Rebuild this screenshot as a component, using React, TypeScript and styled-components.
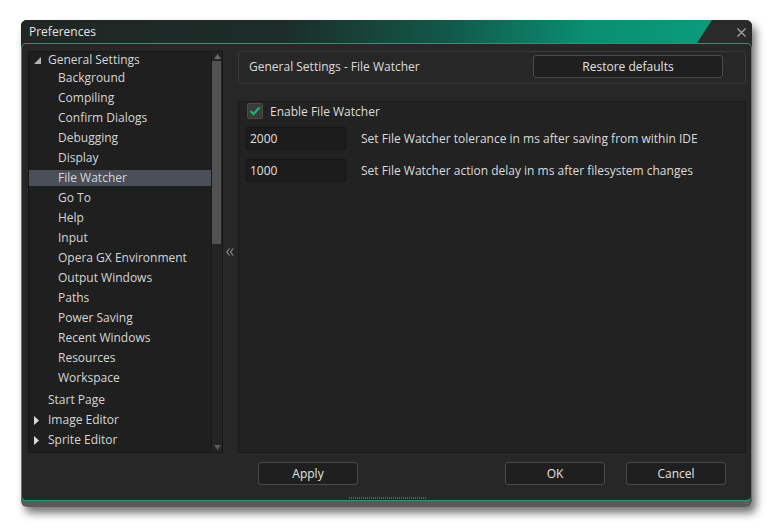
import React from 'react';
import styled, { createGlobalStyle } from 'styled-components';

const Global = createGlobalStyle`
  html, body { margin: 0; padding: 0; background: #ffffff; }
  body { font-family: 'Open Sans', 'Noto Sans', sans-serif; font-size: 12px; }
  * { box-sizing: border-box; }
`;

const Page = styled.div`
  width: 774px;
  height: 528px;
  padding: 20px 0 0 21px;
`;

const Window = styled.div`
  width: 731px;
  display: flex;
  flex-direction: column;
  border-radius: 6px;
  background: linear-gradient(to bottom, #262a29 0, #262a29 50%, #5a5a5a 50%, #5a5a5a 100%);
  padding-bottom: 6px;
  box-shadow: 4px 6px 9px rgba(0, 0, 0, 0.55);
  overflow: hidden;
`;

const TitleBar = styled.div`
  height: 23px;
  display: flex;
  background: #2a2a2a;
`;

const TitleFill = styled.div`
  flex: 1;
  padding-left: 8px;
  line-height: 23px;
  color: #e4e4e4;
  font-size: 12px;
  background: linear-gradient(to right, #202624 0%, #1c2d29 38%, #12594a 62%, #0a8f72 82%, #0a9c7c 100%);
  clip-path: polygon(0 0, 100% 0, calc(100% - 15px) 100%, 0 100%);
`;

const CloseArea = styled.div`
  width: 40px;
  display: flex;
  align-items: center;
  justify-content: flex-end;
  padding: 2px 6px 0 0;
`;

const Body = styled.div`
  position: relative;
  display: flex;
  flex-direction: column;
  border: 1px solid #17a06e;
  border-radius: 5px;
  background: #272727;
  padding: 7px 5px 0 6px;
`;

const MainRow = styled.div`
  display: flex;
  height: 402px;
`;

const TreePanel = styled.div`
  width: 195px;
  border: 1px solid #171717;
  background: #1f1f1f;
  display: grid;
  grid-template-columns: 182px 11px;
  overflow: hidden;
`;

const TreeList = styled.div`
  display: flex;
  flex-direction: column;
`;

const ChildGroup = styled.div`
  display: flex;
  flex-direction: column;
  margin-top: -2px;
  padding-bottom: 2px;
`;

const Row = styled.div`
  height: 20px;
  flex: none;
`;

const RowLabel = styled.div<{ $indent: number; $selected?: boolean }>`
  position: relative;
  height: 16px;
  line-height: 16px;
  padding-left: ${(p) => p.$indent}px;
  color: #d6d6d6;
  white-space: nowrap;
  background: ${(p) => (p.$selected ? '#4b4f57' : 'transparent')};
`;

const Toggle = styled.span`
  position: absolute;
  left: 5px;
  top: 3px;
  width: 8px;
  height: 10px;
  display: flex;
  align-items: center;
`;

const ScrollCol = styled.div`
  display: flex;
  flex-direction: column;
  background: #242424;
  border-left: 1px solid #1a1a1a;
`;

const ScrollArrow = styled.div`
  height: 9px;
  display: flex;
  align-items: center;
  justify-content: center;
`;

const ScrollThumb = styled.div`
  height: 183px;
  margin: 0 1px 0 0;
  background: #525252;
`;

const ScrollSpacer = styled.div`
  flex: 1;
`;

const Gutter = styled.div`
  width: 15px;
  display: flex;
  align-items: center;
  justify-content: center;
  padding-right: 1px;
`;

const RightCol = styled.div`
  width: 508px;
  display: flex;
  flex-direction: column;
  gap: 17px;
`;

const Header = styled.div`
  height: 33px;
  border: 1px solid #383838;
  border-radius: 2px;
  background: #272727;
  display: flex;
  align-items: center;
  justify-content: space-between;
  padding: 0 22px 2px 10px;
  color: #dcdcdc;
`;

const Button = styled.button<{ $width: number }>`
  width: ${(p) => p.$width}px;
  height: 23px;
  padding: 0;
  background: #1f1f1f;
  border: 1px solid #4b4b4b;
  border-radius: 3px;
  color: #e2e2e2;
  font-family: 'Open Sans', 'Noto Sans', sans-serif;
  font-size: 12px;
  line-height: 21px;
  text-align: center;
`;

const Panel = styled.div`
  flex: 1;
  border: 1px solid #1b1b1b;
  background: #222222;
  padding: 1px 0 0 7px;
  display: flex;
  flex-direction: column;
`;

const CheckRow = styled.div`
  display: flex;
  align-items: center;
  gap: 7px;
  height: 16px;
  margin-left: 1px;
  color: #dcdcdc;
`;

const CheckBox = styled.div`
  width: 16px;
  height: 16px;
  border: 1px solid #4a4a4a;
  border-radius: 2px;
  background: #3b3b3b;
  display: flex;
  align-items: center;
  justify-content: center;
`;

const FieldRow = styled.div<{ $top: number }>`
  display: flex;
  align-items: center;
  gap: 15px;
  margin-top: ${(p) => p.$top}px;
  color: #dcdcdc;
`;

const NumberInput = styled.input`
  width: 100px;
  height: 23px;
  padding: 0 0 0 3px;
  background: #1c1c1c;
  border: 1px solid #161616;
  border-radius: 1px;
  color: #e0e0e0;
  font-family: 'Open Sans', 'Noto Sans', sans-serif;
  font-size: 12px;
  outline: none;
`;

const Footer = styled.div`
  display: flex;
  margin: 9px 0 0 210px;
  width: 508px;
  padding: 0 20px 0 20px;
  height: 23px;
`;

const FooterSpacer = styled.div`
  flex: 1;
`;

const FooterGap = styled.div`
  width: 21px;
`;

const GripRow = styled.div`
  height: 15px;
  display: flex;
  justify-content: center;
  align-items: flex-end;
  padding-bottom: 1px;
`;

const Grip = styled.div`
  width: 77px;
  height: 2px;
  background-image: repeating-linear-gradient(to right, #5e5e5e 0 1px, transparent 1px 2px);
`;

const CornerGrip = styled.div`
  position: absolute;
  right: 1px;
  bottom: 1px;
  width: 7px;
  height: 7px;
`;

const children = [
  'Background',
  'Compiling',
  'Confirm Dialogs',
  'Debugging',
  'Display',
  'File Watcher',
  'Go To',
  'Help',
  'Input',
  'Opera GX Environment',
  'Output Windows',
  'Paths',
  'Power Saving',
  'Recent Windows',
  'Resources',
  'Workspace',
];

const Expanded = () => (
  <svg width="7" height="7" viewBox="0 0 7 7">
    <polygon points="7,0 7,7 0,7" fill="#b5b5b5" />
  </svg>
);

const Collapsed = () => (
  <svg width="5" height="9" viewBox="0 0 5 9">
    <polygon points="0,0 5,4.5 0,9" fill="#d8d8d8" />
  </svg>
);

export default function App() {
  return (
    <>
      <Global />
      <Page>
        <Window>
          <TitleBar>
            <TitleFill>Preferences</TitleFill>
            <CloseArea>
              <svg width="9" height="9" viewBox="0 0 9 9">
                <path d="M0.5 0.5 L8.5 8.5 M8.5 0.5 L0.5 8.5" stroke="#a3a3a3" strokeWidth="1.3" />
              </svg>
            </CloseArea>
          </TitleBar>
          <Body>
            <MainRow>
              <TreePanel>
                <TreeList>
                  <Row>
                    <RowLabel $indent={19}>
                      <Toggle>
                        <Expanded />
                      </Toggle>
                      General Settings
                    </RowLabel>
                  </Row>
                  <ChildGroup>
                    {children.map((c) => (
                      <Row key={c}>
                        <RowLabel $indent={29} $selected={c === 'File Watcher'}>
                          {c}
                        </RowLabel>
                      </Row>
                    ))}
                  </ChildGroup>
                  <Row>
                    <RowLabel $indent={19}>Start Page</RowLabel>
                  </Row>
                  <Row>
                    <RowLabel $indent={19}>
                      <Toggle>
                        <Collapsed />
                      </Toggle>
                      Image Editor
                    </RowLabel>
                  </Row>
                  <Row>
                    <RowLabel $indent={19}>
                      <Toggle>
                        <Collapsed />
                      </Toggle>
                      Sprite Editor
                    </RowLabel>
                  </Row>
                </TreeList>
                <ScrollCol>
                  <ScrollArrow>
                    <svg width="7" height="5" viewBox="0 0 7 5">
                      <polygon points="0,5 3.5,0 7,5" fill="#6a6a6a" />
                    </svg>
                  </ScrollArrow>
                  <ScrollThumb />
                  <ScrollSpacer />
                  <ScrollArrow>
                    <svg width="7" height="5" viewBox="0 0 7 5">
                      <polygon points="0,0 7,0 3.5,5" fill="#5a5a5a" />
                    </svg>
                  </ScrollArrow>
                </ScrollCol>
              </TreePanel>
              <Gutter>
                <svg width="8" height="8" viewBox="0 0 8 8">
                  <path d="M3.5 0.5 L0.8 4 L3.5 7.5 M7.2 0.5 L4.5 4 L7.2 7.5" stroke="#8a8a8a" strokeWidth="1.2" fill="none" />
                </svg>
              </Gutter>
              <RightCol>
                <Header>
                  <span>General Settings - File Watcher</span>
                  <Button $width={190}>Restore defaults</Button>
                </Header>
                <Panel>
                  <CheckRow>
                    <CheckBox>
                      <svg width="12" height="10" viewBox="0 0 12 10">
                        <polyline points="1.5,5 4.5,8 10.5,1.5" stroke="#1fae6a" strokeWidth="2.3" fill="none" />
                      </svg>
                    </CheckBox>
                    <span>Enable File Watcher</span>
                  </CheckRow>
                  <FieldRow $top={8}>
                    <NumberInput readOnly value="2000" />
                    <span>Set File Watcher tolerance in ms after saving from within IDE</span>
                  </FieldRow>
                  <FieldRow $top={9}>
                    <NumberInput readOnly value="1000" />
                    <span>Set File Watcher action delay in ms after filesystem changes</span>
                  </FieldRow>
                </Panel>
              </RightCol>
            </MainRow>
            <Footer>
              <Button $width={100}>Apply</Button>
              <FooterSpacer />
              <Button $width={100}>OK</Button>
              <FooterGap />
              <Button $width={100}>Cancel</Button>
            </Footer>
            <GripRow>
              <Grip />
            </GripRow>
            <CornerGrip>
              <svg width="7" height="7" viewBox="0 0 7 7">
                <rect x="5" y="1" width="1" height="1" fill="#6a6a6a" />
                <rect x="3" y="3" width="1" height="1" fill="#6a6a6a" />
                <rect x="5" y="3" width="1" height="1" fill="#6a6a6a" />
                <rect x="1" y="5" width="1" height="1" fill="#6a6a6a" />
                <rect x="3" y="5" width="1" height="1" fill="#6a6a6a" />
                <rect x="5" y="5" width="1" height="1" fill="#6a6a6a" />
              </svg>
            </CornerGrip>
          </Body>
        </Window>
      </Page>
    </>
  );
}
